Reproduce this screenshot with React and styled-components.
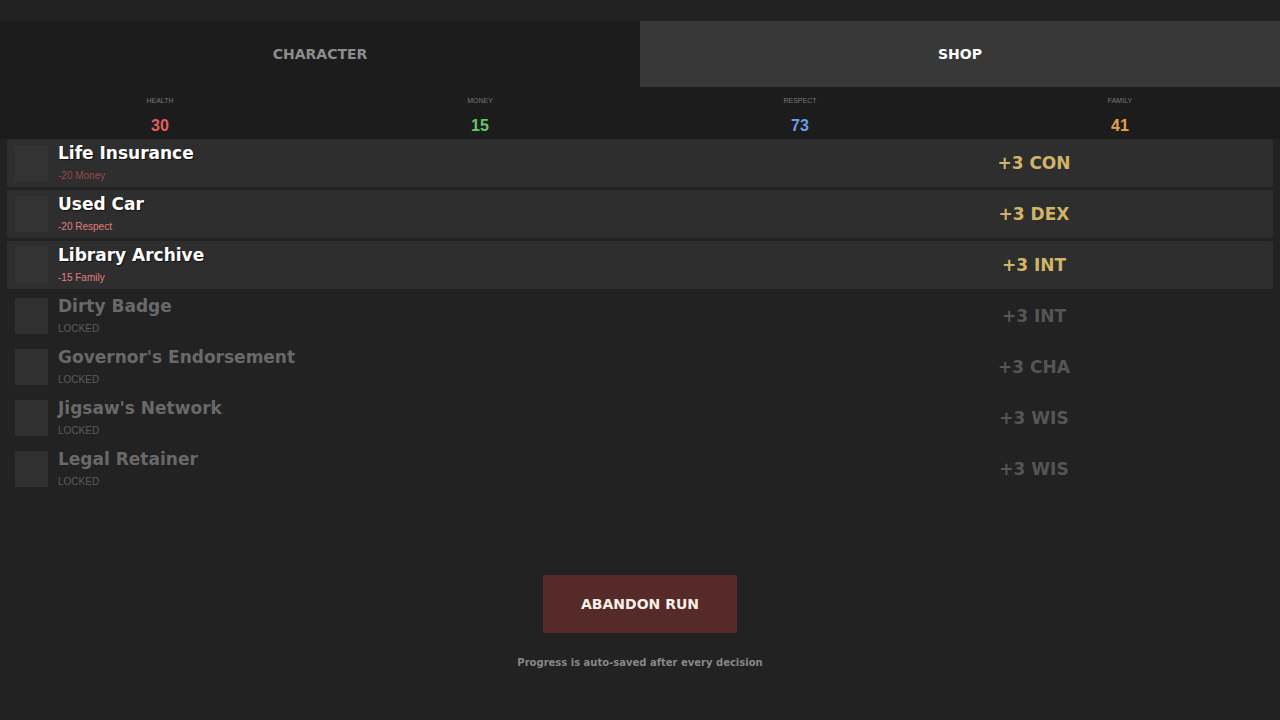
import React, { useState } from 'react'
import styled, { createGlobalStyle } from 'styled-components'

const stats = [
  { label: 'HEALTH', value: 30, color: '#e06060' },
  { label: 'MONEY', value: 15, color: '#62c866' },
  { label: 'RESPECT', value: 73, color: '#6a9fe6' },
  { label: 'FAMILY', value: 41, color: '#e6a04a' },
]

const items = [
  { name: 'Life Insurance', note: '-20 Money', bonus: '+3 CON', tooExpensive: true },
  { name: 'Used Car', note: '-20 Respect', bonus: '+3 DEX' },
  { name: 'Library Archive', note: '-15 Family', bonus: '+3 INT' },
  { name: 'Dirty Badge', note: 'LOCKED', bonus: '+3 INT', locked: true },
  { name: "Governor's Endorsement", note: 'LOCKED', bonus: '+3 CHA', locked: true },
  { name: "Jigsaw's Network", note: 'LOCKED', bonus: '+3 WIS', locked: true },
  { name: 'Legal Retainer', note: 'LOCKED', bonus: '+3 WIS', locked: true },
]

const App = () => {
  const [tab, setTab] = useState('shop')

  return (
    <Screen>
      <GlobalStyle />
      <Tabs>
        <Tab type="button" $active={tab === 'character'} onClick={() => setTab('character')}>CHARACTER</Tab>
        <Tab type="button" $active={tab === 'shop'} onClick={() => setTab('shop')}>SHOP</Tab>
      </Tabs>

      <StatBar>
        {stats.map(stat => (
          <Stat key={stat.label}>
            <StatLabel>{stat.label}</StatLabel>
            <StatValue $color={stat.color}>{stat.value}</StatValue>
          </Stat>
        ))}
      </StatBar>

      <ItemList>
        {items.map(item => (
          <li key={item.name}>
            <ItemButton type="button" disabled={item.locked}>
              <Thumb />
              <ItemText>
                <ItemName $locked={item.locked}>{item.name}</ItemName>
                <ItemNote $locked={item.locked} $dim={item.tooExpensive}>{item.note}</ItemNote>
              </ItemText>
              <Bonus $locked={item.locked}>{item.bonus}</Bonus>
            </ItemButton>
          </li>
        ))}
      </ItemList>

      <Footer>
        <AbandonButton type="button">ABANDON RUN</AbandonButton>
        <SaveNote>Progress is auto-saved after every decision</SaveNote>
      </Footer>
    </Screen>
  )
}

const displayFont = "'DejaVu Sans', 'Liberation Sans', sans-serif"

const GlobalStyle = createGlobalStyle`
  * {
    box-sizing: border-box;
  }

  body {
    margin: 0;
    background: #222;
    color: #fff;
    font-family: 'Liberation Sans', Arial, sans-serif;
  }

  button {
    border: 0;
    cursor: pointer;
  }

  button:disabled {
    cursor: default;
  }
`

const Screen = styled.main`
  display: flex;
  flex-direction: column;
  min-height: 100vh;
  padding: 21px 0 50px;
`

const Tabs = styled.nav`
  display: grid;
  grid-template-columns: 1fr 1fr;
  background: #1c1c1c;
`

const Tab = styled.button`
  height: 66px;
  background: ${props => (props.$active ? '#383838' : '#1c1c1c')};
  color: ${props => (props.$active ? '#fff' : '#8c8c8c')};
  font-family: ${displayFont};
  font-size: 14px;
  font-weight: 700;
`

const StatBar = styled.section`
  display: grid;
  grid-template-columns: repeat(4, 1fr);
  padding: 9px 0 3px;
  background: #1c1c1c;
`

const Stat = styled.div`
  display: flex;
  flex-direction: column;
  align-items: center;
  gap: 10px;
`

const StatLabel = styled.span`
  color: #777;
  font-size: 7px;
  line-height: 10px;
`

const StatValue = styled.strong`
  color: ${props => props.$color};
  font-size: 16px;
  line-height: 20px;
`

const ItemList = styled.ul`
  display: flex;
  flex-direction: column;
  gap: 3px;
  margin: 0;
  padding: 0 7px;
  list-style: none;
`

const ItemButton = styled.button`
  display: flex;
  align-items: center;
  width: 100%;
  height: 48px;
  padding: 0 0 0 8px;
  border-radius: 2px;
  background: #2e2e2e;
  font-family: inherit;
  text-align: left;

  &:disabled {
    background: transparent;
  }
`

const Thumb = styled.span`
  width: 33px;
  height: 36px;
  background: #333;

  ${ItemButton}:disabled & {
    background: #303030;
  }
`

const ItemText = styled.span`
  display: flex;
  flex: 1;
  flex-direction: column;
  gap: 8px;
  padding-left: 10px;
`

const ItemName = styled.span`
  color: ${props => (props.$locked ? '#696969' : '#fff')};
  font-family: ${displayFont};
  font-size: 17px;
  font-weight: 700;
  line-height: 18px;
  text-shadow: ${props => (props.$locked ? 'none' : '1px 1px 1px #111')};
`

const ItemNote = styled.span`
  color: ${props => (props.$locked ? '#5c5c5c' : props.$dim ? '#944a4c' : '#e07f80')};
  font-size: 10px;
  line-height: 12px;
`

const Bonus = styled.span`
  flex: 0 0 38%;
  color: ${props => (props.$locked ? '#555' : '#d0b468')};
  font-family: ${displayFont};
  font-size: 17px;
  font-weight: 700;
  text-align: center;
`

const Footer = styled.footer`
  display: flex;
  flex-direction: column;
  align-items: center;
  gap: 22px;
  margin-top: auto;
`

const AbandonButton = styled.button`
  padding: 20px 38px;
  border-radius: 2px;
  background: #572a2a;
  color: #f5efe8;
  font-family: ${displayFont};
  font-size: 14px;
  font-weight: 700;
  line-height: 18px;
`

const SaveNote = styled.p`
  margin: 0;
  color: #888;
  font-family: ${displayFont};
  font-size: 10px;
  font-weight: 700;
  line-height: 15px;
`

export default App
